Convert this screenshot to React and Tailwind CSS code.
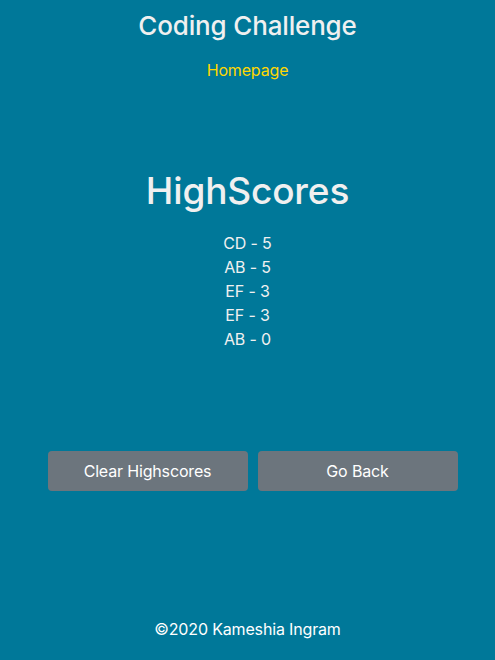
export default function App() {
  const scores = ["CD - 5", "AB - 5", "EF - 3", "EF - 3", "AB - 0"];
  return (
    <div
      className="min-h-[660px] bg-[#007899] text-[#f0f0f0] flex flex-col items-center tracking-[-0.01em]"
      style={{ fontFamily: "Inter, 'Noto Sans', sans-serif" }}
    >
      <header className="flex flex-col items-center pt-[8px]">
        <h1 className="text-[26px] font-medium leading-[36px]">Coding Challenge</h1>
        <a className="mt-[16px] text-[16px] leading-[20px] text-[#ffd700]">Homepage</a>
      </header>

      <main className="flex flex-col items-center mt-[88px]">
        <h2 className="text-[37px] font-medium leading-[46px]">HighScores</h2>
        <ul className="mt-[17px] flex flex-col items-center text-[16px] leading-[24px]">
          {scores.map((s, i) => (
            <li key={i}>{s}</li>
          ))}
        </ul>
        <div className="mt-[100px] ml-[10px] flex gap-[10px]">
          <button className="w-[200px] h-[40px] rounded bg-[#6c757d] text-white text-[16px]">
            Clear Highscores
          </button>
          <button className="w-[200px] h-[40px] rounded bg-[#6c757d] text-white text-[16px]">
            Go Back
          </button>
        </div>
      </main>

      <footer className="mt-[128px] text-[16px] leading-[20px] text-white">©2020 Kameshia Ingram</footer>
    </div>
  );
}
